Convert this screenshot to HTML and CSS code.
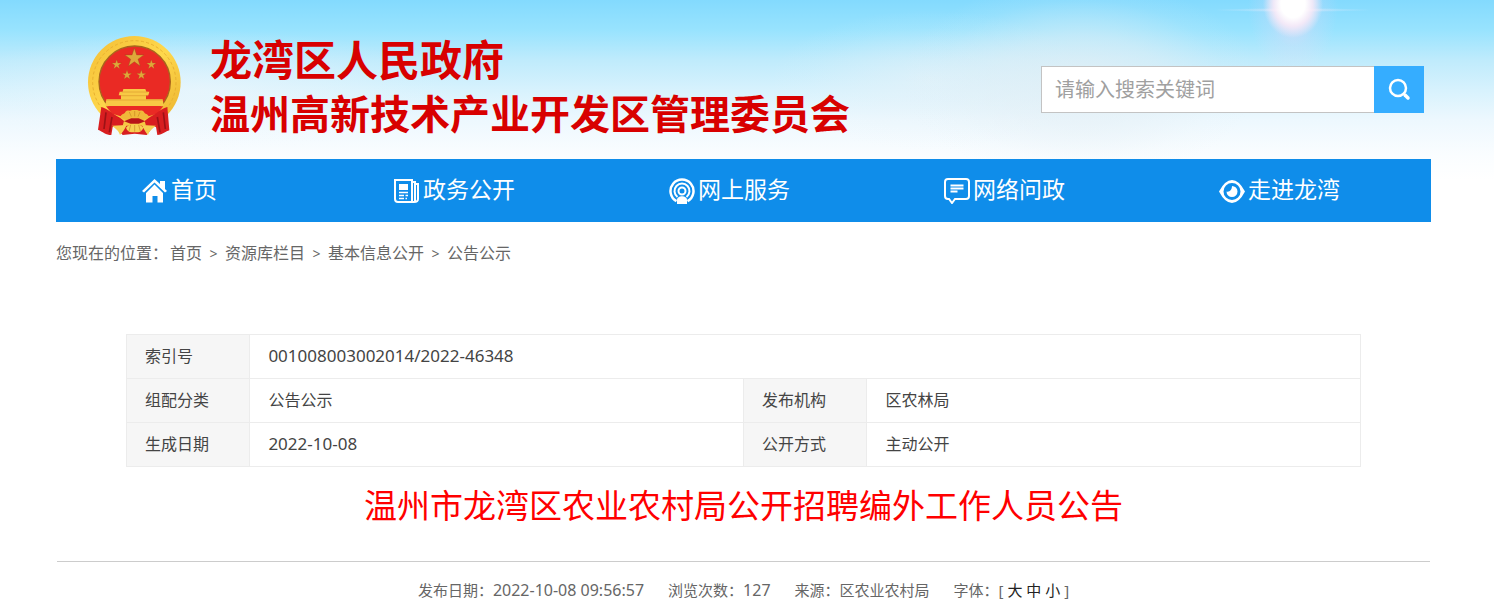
FILE: index.html
```html
<!DOCTYPE html>
<html lang="zh-CN">
  <head>
    <meta charset="UTF-8" />
    <title>温州市龙湾区农业农村局公开招聘编外工作人员公告</title>
    <link rel="stylesheet" href="styles.css">
  </head>

  <body>
    <header class="header">
      <a class="logo" href="#">
        <svg class="emblem" viewBox="51 42 288 303" aria-hidden="true">
          <defs>
            <linearGradient id="gold" x1="0" y1="0" x2="1" y2="1">
              <stop offset="0" stop-color="#f3bd35" />
              <stop offset=".5" stop-color="#ffd84c" />
              <stop offset="1" stop-color="#eab02c" />
            </linearGradient>
            <path id="star" d="M0-10 2.3-3.1H9.5L3.7 1.2 5.9 8.1 0 3.8-5.9 8.1-3.7 1.2-9.5-3.1H-2.3z" />
          </defs>
          <circle cx="193" cy="184" r="139" fill="url(#gold)" />
          <circle cx="193" cy="184" r="125" fill="none" stroke="#e8b030" stroke-width="3" stroke-dasharray="9 7" />
          <circle cx="194" cy="182" r="107" fill="#ea2a24" stroke="#a8641c" stroke-width="4" />
          <g fill="#dfa83a" stroke="#96501a" stroke-width=".4">
            <use href="#star" transform="translate(193 111) scale(3)" />
            <use href="#star" transform="translate(140 131) scale(1.5)" />
            <use href="#star" transform="translate(244 131) scale(1.5)" />
            <use href="#star" transform="translate(171 162) scale(1.5)" />
            <use href="#star" transform="translate(214 162) scale(1.5)" />
          </g>
          <path fill="#f8c945" d="M160 204h66l3 8h9l-3 11h-7v12h50l3 20H106l3-20h44v-12h-7l3-11h9z" />
          <path stroke="#dc9c2e" stroke-width="2" d="M155 213h78M152 224h82M110 237h168" />
          <path fill="#ea2a24" d="M108 256h172l-18 22-34 10h-68l-34-10z" />
          <path fill="#f6c843" d="M98 262l52 30h88l50-30-14 30-38 20h-90l-36-20z" />
          <path fill="#d81e20" d="M94 258c18 4 34 22 56 32l12 10-4 14-30 4-4 24c-16 0-26-10-40-16zM292 258c-18 4-34 22-56 32l-12 10 4 14 30 4 4 24c16 0 26-12 36-14z" />
          <path stroke="#9c1216" stroke-width="5" fill="none" d="M108 274l-6 50M126 288l-8 46M280 274l6 50M262 288l8 46" />
          <path fill="#f0b93a" d="M150 290c4-14 14-9 16-17 6-8 14-1 20-6h16c6 5 14-2 20 6 2 8 12 3 16 17l-26 9-18-8-18 8z" />
          <path fill="#d81e20" d="M134 314h118l-22 28-36-4-36 4z" />
          <path fill="#f6cf52" d="M126 314l44-2c-6 14-14 24-20 30-4-14-14-20-24-28zM258 314l-42-2c6 14 12 24 18 30 4-14 14-20 24-28zM168 320c8-14 44-14 52 0-6 16-18 14-26 14s-20 2-26-14z" />
          <path stroke="#c98723" stroke-width="2" fill="none" d="M194 312v20M182 312l-5 18M206 312l5 18M194 270v16M178 273l6 14M210 273l-6 14" />
          <path fill="#b81418" d="M162 301l22-9h22l20 9-20 7h-24z" />
        </svg>
        <span class="logo-text">
          <span class="logo-gov">龙湾区人民政府</span>
          <span class="logo-zone">温州高新技术产业开发区管理委员会</span>
        </span>
      </a>
      <form class="search" role="search">
        <input type="text" class="search-input" placeholder="请输入搜索关键词" aria-label="请输入搜索关键词" />
        <button type="button" class="search-btn" aria-label="搜索">
          <svg width="24" height="24" viewBox="0 0 24 24" fill="none" stroke="#fff" stroke-linecap="round">
            <circle cx="11" cy="10" r="8" stroke-width="2.5" />
            <path d="M18 17l3 3" stroke-width="3.5" />
          </svg>
        </button>
      </form>
    </header>

    <div class="container">
      <nav class="nav">
        <a href="#">
          <svg viewBox="0 0 26 26" fill="#fff">
            <path d="M0 13L12.500 1 18 6V3h5v8l2 2-2 1.500L12.500 4.500 2 14.500z" />
            <path d="M4 15l8.500-8.500L21 15v9.500h-5.500V18h-5v6.500H4z" />
          </svg>
          <span>首页</span>
        </a>
        <a href="#">
          <svg viewBox="0 0 26 26" fill="none" stroke="#fff">
            <path stroke-width="2" d="M1 2h17v22H4c-2 0-3-1-3-3z" />
            <path stroke-width="2" d="M18 4h3v19c0 1-1 1-3 1M21 6h3v15c0 2-1 3-4 3" />
            <path fill="#fff" stroke="none" d="M5 6h9v6H5z" />
            <path stroke-width="1.5" d="M5 14.5h9M5 17.5h5M11.5 17.5H14M5 20.5h5M11.5 20.5H13" />
          </svg>
          <span>政务公开</span>
        </a>
        <a href="#">
          <svg viewBox="0 0 26 26" fill="none" stroke="#fff">
            <path stroke-width="2.5" d="M7.5 23.2a11.5 11.5 0 1 1 11 0" />
            <path stroke-width="2" d="M8.5 19a7.5 7.5 0 1 1 9 0" />
            <circle cx="13" cy="13" r="3.5" stroke-width="2" />
            <path fill="#fff" stroke="none" d="M8 26v-4c0-5 10-5 10 0v4z" />
          </svg>
          <span>网上服务</span>
        </a>
        <a href="#">
          <svg viewBox="0 0 26 26" fill="none" stroke="#fff">
            <path stroke-width="2" d="M4 1h18c2 0 3 1 3 3v14c0 2-1 3-3 3H11l-3 4-3-4H4c-2 0-3-1-3-3V4c0-2 1-3 3-3z" />
            <path stroke-width="1.8" d="M6.500 7.500h13M6.500 10.500h13M6.500 13.500h7" />
          </svg>
          <span>网络问政</span>
        </a>
        <a href="#">
          <svg viewBox="0 0 26 26">
            <path fill="#fff" fill-rule="evenodd" d="M0 13.500Q6 2 13 2t13 11.500Q20 25 13 25T0 13.500zM13 5a8.500 8.500 0 1 0 0 17 8.500 8.500 0 0 0 0-17z" />
            <path fill="#fff" d="M13 8a5.500 5.500 0 1 1-5.500 5.500c3 1 5.500-2 5.500-5.500z" />
          </svg>
          <span>走进龙湾</span>
        </a>
      </nav>

      <div class="crumbs">
        <span>您现在的位置：</span><a href="#">首页</a><i>&gt;</i><a href="#">资源库栏目</a><i>&gt;</i><a href="#">基本信息公开</a><i>&gt;</i><a href="#">公告公示</a>
      </div>

      <table class="info">
        <colgroup>
          <col class="col-label" />
          <col class="col-value" />
          <col class="col-label" />
          <col class="col-value" />
        </colgroup>
        <tbody>
          <tr>
            <th scope="row">索引号</th>
            <td colspan="3" class="number">001008003002014/2022-46348</td>
          </tr>
          <tr>
            <th scope="row">组配分类</th>
            <td>公告公示</td>
            <th scope="row">发布机构</th>
            <td>区农林局</td>
          </tr>
          <tr>
            <th scope="row">生成日期</th>
            <td class="number">2022-10-08</td>
            <th scope="row">公开方式</th>
            <td>主动公开</td>
          </tr>
        </tbody>
      </table>

      <h1 class="title">温州市龙湾区农业农村局公开招聘编外工作人员公告</h1>

      <div class="meta">
        <span>发布日期：<b>2022-10-08 09:56:57</b></span>
        <span>浏览次数：<b>127</b></span>
        <span>来源：区农业农村局</span>
        <span>字体：[ <a href="#">大</a> <a href="#">中</a> <a href="#">小</a> ]</span>
      </div>
    </div>
  </body>
</html>
```
FILE: styles.css
```css
* {
  box-sizing: border-box;
}
body {
  margin: 0;
  color: #444;
  font-size: 16px;
  font-family: "Microsoft YaHei", "Noto Sans", "Noto Sans CJK SC", sans-serif;
  /* sun, its glow, clouds, then the sky itself */
  background:
    radial-gradient(ellipse 30px 34px at 1293px 4px, #fff 40%, rgba(255, 236, 247, 0.8) 65%, rgba(255, 225, 245, 0) 100%),
    radial-gradient(ellipse 80px 2px at 1293px 10px, rgba(255, 240, 250, 0.5), rgba(255, 240, 250, 0)),
    radial-gradient(ellipse 45px 70px at 1293px 5px, rgba(236, 215, 246, 0.9), rgba(236, 215, 246, 0.2) 60%, rgba(236, 215, 246, 0)),
    radial-gradient(ellipse 180px 100px at 1080px 80px, rgba(228, 239, 245, 0.8), rgba(228, 239, 245, 0.5) 45%, rgba(228, 239, 245, 0.1) 80%, rgba(228, 239, 245, 0)),
    radial-gradient(ellipse 160px 70px at 930px 80px, rgba(232, 242, 248, 0.6), rgba(232, 242, 248, 0.1) 75%, rgba(232, 242, 248, 0)),
    radial-gradient(ellipse 260px 60px at 200px 90px, rgba(240, 247, 252, 0.6), rgba(240, 247, 252, 0.1) 75%, rgba(240, 247, 252, 0)),
    linear-gradient(#83dafe 0, #98e3fe 30px, #bfebfc 60px, #d7f2fd 90px, #edf8fe 120px, #fafdff 155px, #fff 180px);
  background-color: #fff;
  background-repeat: no-repeat;
  background-size: 100% 180px;
}
a {
  color: inherit;
  text-decoration: none;
}
.header {
  display: flex;
  justify-content: space-between;
  height: 159px;
  padding: 33px 70px 0 87px;
}
.logo {
  display: flex;
  gap: 27px;
}
.emblem {
  width: 96px;
  height: 101px;
  margin-top: 2px;
}
.logo-text {
  display: flex;
  flex-direction: column;
  color: #d80000;
  font-weight: bold;
  line-height: 54px;
  white-space: nowrap;
}
.logo-gov {
  font-size: 42px;
}
.logo-zone {
  font-size: 40px;
}
.search {
  display: flex;
  height: 47px;
  margin-top: 33px;
}
.search-input {
  width: 333px;
  padding: 0 13px;
  border: 1px solid #c3c3c3;
  border-right: 0;
  background: #fff;
  font: inherit;
  font-size: 20px;
  outline: none;
}
.search-input::placeholder {
  color: #a0a0a0;
}
.search-btn {
  display: flex;
  align-items: center;
  justify-content: center;
  width: 50px;
  padding: 0;
  border: 0;
  background: #35adff;
}
.container {
  padding: 0 63px 0 56px;
}
.nav {
  display: flex;
  height: 63px;
  background: #0f8dea;
  color: #fff;
  font-size: 23px;
  line-height: 61px;
}
.nav a {
  display: flex;
  flex: 1;
  justify-content: center;
  gap: 3px;
  padding-right: 28px;
}
.nav svg {
  width: 26px;
  height: 26px;
  margin-top: 19px;
}
.crumbs {
  margin-top: 19px;
  color: #666;
  line-height: 24px;
}
.crumbs span {
  padding-right: 2px;
}
.crumbs i {
  display: inline-block;
  width: 23px;
  font-size: 14px;
  font-style: normal;
  text-align: center;
}
.info {
  width: calc(100% - 140px);
  margin: 68px 70px 0;
  border-collapse: collapse;
  table-layout: fixed;
}
.info th,
.info td {
  height: 44px;
  padding: 0 18px 2px;
  border: 1px solid #ececec;
  font-weight: normal;
  line-height: 24px;
  text-align: left;
}
.info th {
  background: #f6f6f6;
}
.info .number {
  font-size: 17px;
}
.col-label {
  width: 10%;
}
.col-value {
  width: 40%;
}
.title {
  margin: 15px 1px 0;
  padding-bottom: 31px;
  border-bottom: 1px solid #ccc;
  color: #f00;
  font-size: 33px;
  font-weight: normal;
  line-height: 48px;
  text-align: center;
}
.meta {
  display: flex;
  justify-content: center;
  gap: 24px;
  margin-top: 16px;
  color: #666;
  font-size: 15px;
  line-height: 24px;
}
.meta b {
  font-size: 16px;
  font-weight: normal;
}
.meta a {
  color: #222;
}
```
